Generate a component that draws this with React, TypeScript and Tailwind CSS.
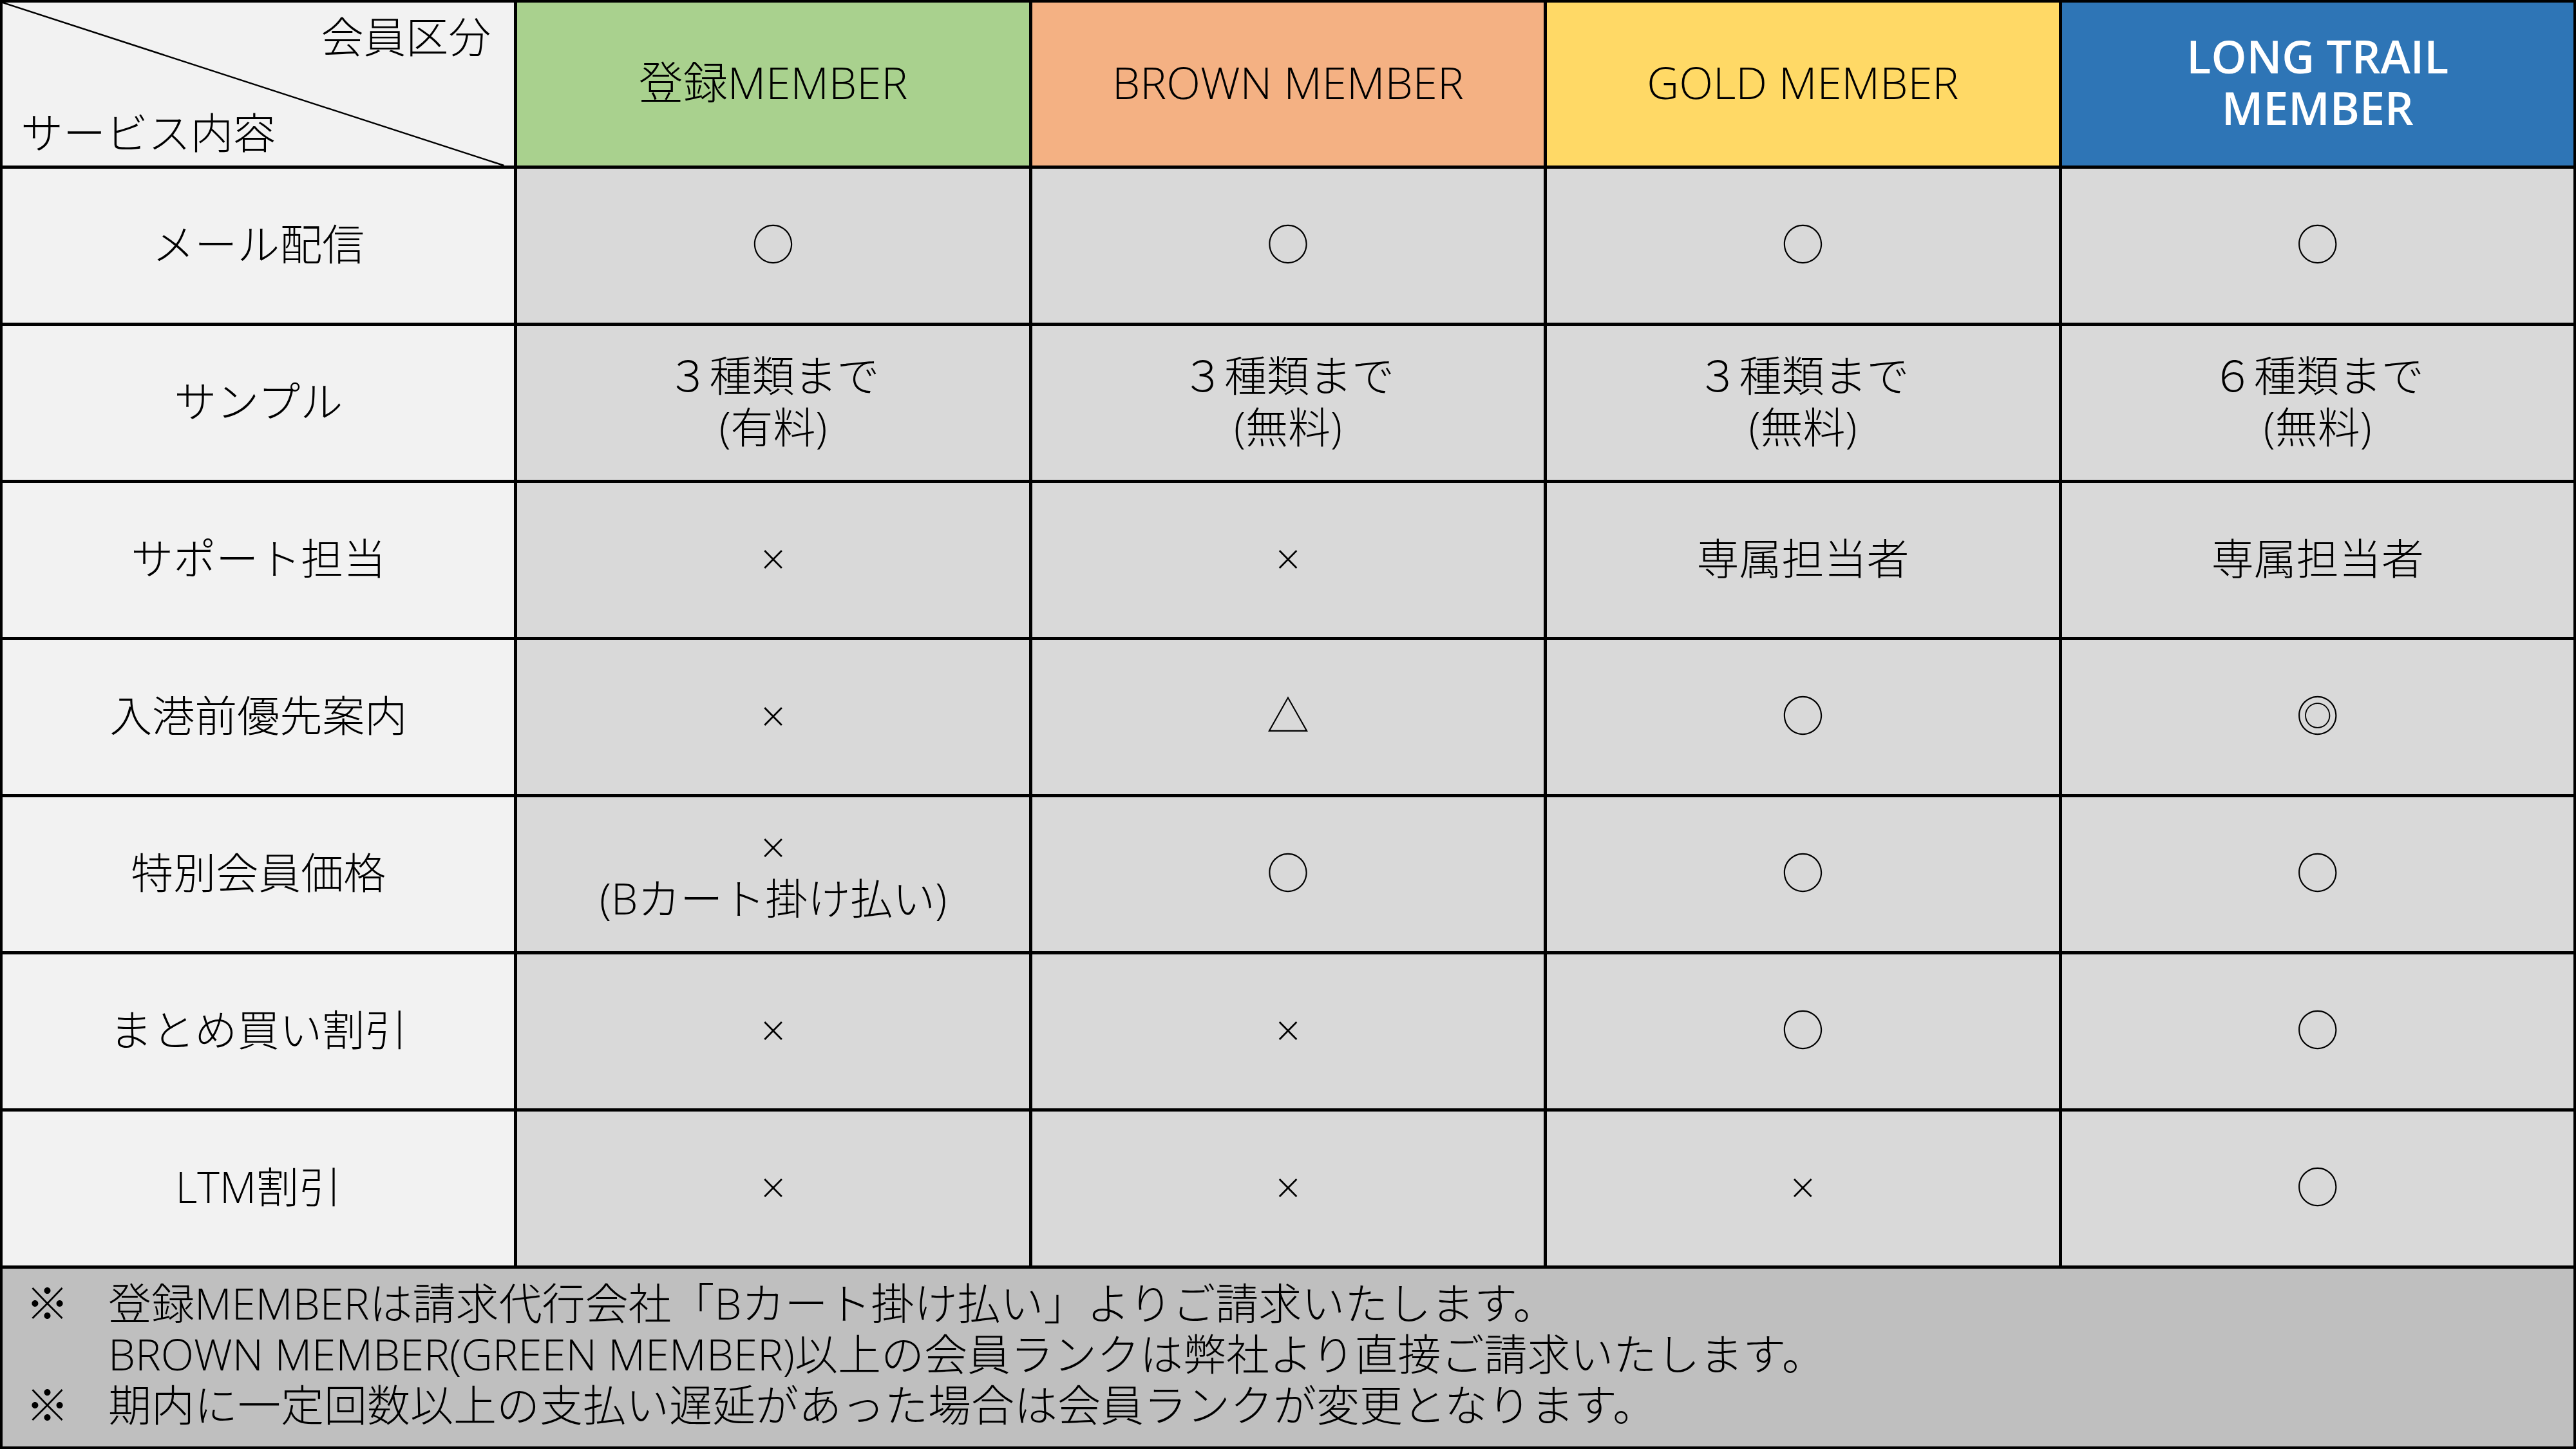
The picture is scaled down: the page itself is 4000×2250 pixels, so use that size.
const headers = [
  { label: "登録MEMBER", className: "bg-[#a9d18e] text-black text-[69px]" },
  { label: "BROWN MEMBER", className: "bg-[#f4b183] text-black text-[69px]" },
  { label: "GOLD MEMBER", className: "bg-[#ffd966] text-black text-[69px]" },
  { label: "LONG TRAIL\nMEMBER", className: "bg-[#2e75b6] text-white font-semibold text-[70px]" },
];

const rows: [string, string[]][] = [
  ["メール配信", ["○", "○", "○", "○"]],
  ["サンプル", ["３種類まで\n(有料)", "３種類まで\n(無料)", "３種類まで\n(無料)", "６種類まで\n(無料)"]],
  ["サポート担当", ["×", "×", "専属担当者", "専属担当者"]],
  ["入港前優先案内", ["×", "△", "○", "◎"]],
  ["特別会員価格", ["×\n(Bカート掛け払い)", "○", "○", "○"]],
  ["まとめ買い割引", ["×", "×", "○", "○"]],
  ["LTM割引", ["×", "×", "×", "○"]],
];

function Cell({ text, className }: { text: string; className: string }) {
  return (
    <div className={`flex items-center justify-center text-center whitespace-pre-line pb-[8px] ${className}`}>
      {text}
    </div>
  );
}

export default function App() {
  return (
    <div className="w-[4000px] h-[2250px] bg-black p-[4px] grid grid-cols-5 grid-rows-[253px_repeat(7,239px)_1fr] gap-[5px] font-['Open_Sans','Noto_Sans_CJK_JP',sans-serif] font-light text-[66px] leading-[80px] text-black">
      {/* corner */}
      <div className="relative bg-[#f2f2f2] flex flex-col justify-between pt-[12px] pb-[12px] pl-[28px] pr-[36px]">
        <svg className="absolute inset-0 w-full h-full" viewBox="0 0 100 100" preserveAspectRatio="none">
          <line x1="0" y1="0" x2="98" y2="100" stroke="black" strokeWidth="2.5" vectorEffect="non-scaling-stroke" />
        </svg>
        <span className="relative self-end">会員区分</span>
        <span className="relative">サービス内容</span>
      </div>
      {headers.map((h) => (
        <Cell key={h.label} text={h.label} className={h.className} />
      ))}

      {rows.map(([label, values]) => (
        <div key={label} className="contents">
          <Cell text={label} className="bg-[#f2f2f2]" />
          {values.map((v, i) => (
            <Cell key={i} text={v} className="bg-[#d9d9d9]" />
          ))}
        </div>
      ))}

      <div className="col-span-5 bg-[#bfbfbf] pt-[14px] pl-[36px] grid grid-cols-[128px_1fr] content-start text-[67px] leading-[79px]">
        <span>※</span>
        <span>登録MEMBERは請求代行会社「Bカート掛け払い」よりご請求いたします。</span>
        <span></span>
        <span>BROWN MEMBER(GREEN MEMBER)以上の会員ランクは弊社より直接ご請求いたします。</span>
        <span>※</span>
        <span>期内に一定回数以上の支払い遅延があった場合は会員ランクが変更となります。</span>
      </div>
    </div>
  );
}
